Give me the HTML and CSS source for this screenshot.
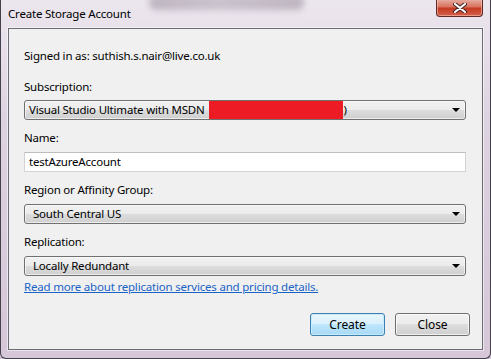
FILE: index.html
```html
<!DOCTYPE html>
<html lang="en">
<head>
    <meta charset="UTF-8">
    <title>Create Storage Account</title>
    <link rel="stylesheet" href="styles.css">
</head>
<body>
<div class="window">
    <div class="titlebar">
        <span class="ghost"></span>
        <span class="title">Create Storage Account</span>
        <button class="close-btn" aria-label="Close">
            <svg width="14" height="10" viewBox="0 0 14 10">
                <path d="M2 1 L12 9 M12 1 L2 9" stroke="#3a2020" stroke-width="4" stroke-linecap="round"/>
                <path d="M2 1 L12 9 M12 1 L2 9" stroke="#ffffff" stroke-width="2.2" stroke-linecap="round"/>
            </svg>
        </button>
    </div>

    <div class="client">
        <p class="signed">Signed in as: suthish.s.nair@live.co.uk</p>

        <div class="label label-first">Subscription:</div>
        <div class="combo combo-tight">
            <span class="combo-text">Visual Studio Ultimate with MSDN</span>
            <span class="redact"></span>
            <span class="combo-text">)</span>
            <span class="arrow"></span>
        </div>

        <div class="label">Name:</div>
        <div class="textbox">testAzureAccount</div>

        <div class="label">Region or Affinity Group:</div>
        <div class="combo">
            <span class="combo-text">South Central US</span>
            <span class="arrow"></span>
        </div>

        <div class="label">Replication:</div>
        <div class="combo">
            <span class="combo-text">Locally Redundant</span>
            <span class="arrow"></span>
        </div>

        <a class="more-link" href="#">Read more about replication services and pricing details.</a>

        <div class="actions">
            <button class="btn btn-default">Create</button>
            <button class="btn">Close</button>
        </div>
    </div>
</div>
</body>
</html>
```

FILE: styles.css
```css
* {
    box-sizing: border-box;
}

body {
    margin: 0;
    padding: 0;
    font-family: 'Noto Sans', 'Open Sans', sans-serif;
    font-size: 11.5px;
    letter-spacing: -0.2px;
    line-height: 16px;
    color: #000;
    background-color: #cfc2d4;
}

.window {
    width: 491px;
    height: 359px;
    display: flex;
    flex-direction: column;
    padding: 0 7px 8px;
    border: 1px solid #43414b;
    border-top: none;
    border-radius: 0 0 6px 6px;
    background: linear-gradient(180deg, #ece6ee 0%, #ddd2e0 35%, #d5c6d8 100%);
}

.titlebar {
    position: relative;
    height: 28px;
    display: flex;
    justify-content: space-between;
    align-items: flex-start;
    margin: 0 -7px;
    padding: 0 7px;
}

/* blurred window content showing through the glass */
.ghost {
    position: absolute;
    left: 148px;
    top: -5px;
    width: 155px;
    height: 15px;
    border-radius: 7px;
    background: linear-gradient(90deg, rgba(85, 70, 90, 0.3), rgba(85, 70, 90, 0.22) 45%, rgba(85, 70, 90, 0.3));
    filter: blur(3px);
}

.title {
    position: relative;
    margin-top: 6px;
}

.close-btn {
    position: relative;
    width: 47px;
    height: 18px;
    margin-top: -1px;
    padding: 0;
    border: 1px solid #5e2a26;
    border-top: none;
    border-radius: 0 0 4px 4px;
    background: linear-gradient(180deg, #e8b3a6 0%, #d8735f 45%, #c43a22 55%, #d5604a 100%);
    box-shadow: inset 0 0 0 1px rgba(255, 210, 200, 0.5);
    display: flex;
    justify-content: center;
    align-items: center;
}

.client {
    flex: 1;
    display: flex;
    flex-direction: column;
    padding: 0 16px 0 15px;
    background-color: #f0f0f0;
    border: 1px solid #6e6b74;
    box-shadow: 0 0 0 1px rgba(255, 255, 255, 0.55);
}

.signed {
    margin: 19px 0 0;
}

.label {
    margin: 10px 0 6px;
}

.label-first {
    margin-top: 15px;
    margin-bottom: 5px;
}

.combo {
    height: 20px;
    display: flex;
    align-items: stretch;
    padding-left: 8px;
    border: 1px solid #707070;
    border-radius: 3px;
    background: linear-gradient(180deg, #f2f2f2 0%, #ebebeb 50%, #dddddd 50%, #cfcfcf 100%);
    box-shadow: inset 0 0 0 1px rgba(255, 255, 255, 0.6);
}

.combo-tight {
    padding-left: 4px;
}

.combo-text {
    line-height: 18px;
    white-space: nowrap;
}

.redact {
    width: 134px;
    margin: 0 1px 0 4px;
    background-color: #ed1c24;
}

.arrow {
    margin: auto 5px auto auto;
    width: 0;
    height: 0;
    border-left: 4px solid transparent;
    border-right: 4px solid transparent;
    border-top: 4px solid #000;
}

.textbox {
    height: 20px;
    padding-left: 4px;
    line-height: 18px;
    background-color: #fff;
    border: 1px solid #d3d3d3;
    border-top-color: #bdbdbd;
}

.more-link {
    margin-top: 3px;
    color: #1a63c6;
    text-decoration: underline;
    align-self: flex-start;
}

.actions {
    display: flex;
    justify-content: flex-end;
    gap: 10px;
    margin: 18px -4px 0 0;
}

.btn {
    width: 75px;
    height: 23px;
    padding: 0;
    font-family: inherit;
    font-size: 12px;
    letter-spacing: -0.1px;
    color: #000;
    border: 1px solid #707070;
    border-radius: 3px;
    background: linear-gradient(180deg, #f2f2f2 0%, #ebebeb 50%, #dddddd 50%, #cfcfcf 100%);
    box-shadow: inset 0 0 0 1px rgba(255, 255, 255, 0.7);
    cursor: pointer;
}

.btn-default {
    border-color: #3c7fb1;
    background: linear-gradient(180deg, #eaf6fd 0%, #d9f0fc 50%, #bee6fd 50%, #a7d9f5 100%);
    box-shadow: inset 0 0 0 1px #c9ecfb;
}
```
